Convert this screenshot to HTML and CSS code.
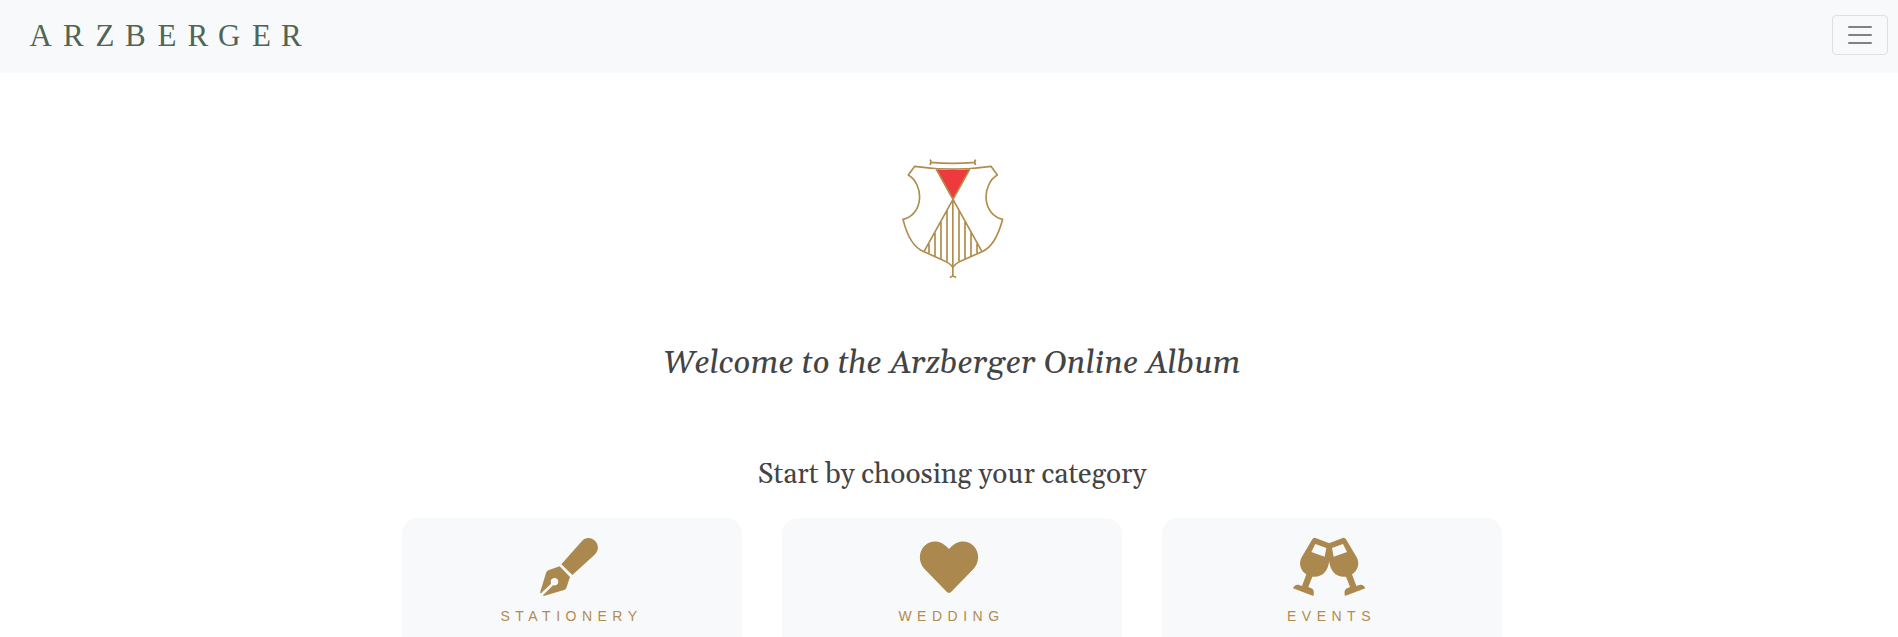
FILE: index.html
```html
<!DOCTYPE html>
<html lang="en">
<head>
<meta charset="utf-8">
<title>Arzberger Online Album</title>
<link rel="stylesheet" href="styles.css">
</head>
<body>
<header class="navbar">
  <a class="brand" aria-label="Arzberger">
    <svg width="290" height="40" viewBox="20 15 290 40"><text class="brand-text" y="46" x="29.5 63 95.5 125 157.500 187.500 218 252 281">ARZBERGER</text></svg>
  </a>
  <button class="toggler" aria-label="Menu">
    <svg width="30" height="30" viewBox="0 0 30 30"><path d="M4 7h22M4 15h22M4 23h22" fill="none" stroke="currentColor" stroke-width="2" stroke-linecap="round"/></svg>
  </button>
</header>
<main class="content">
  <svg class="crest" width="130" height="135" viewBox="0 0 390 405">
    <path class="ruby" d="M139 58Q188 62 239 58L188.500 147Z"/>
    <g class="lines">
      <path d="M120 29Q126 36 120 45M257 29Q251 36 257 45M122 37Q188 43 255 37"/>
      <path d="M74 49Q188 66 303 49L322 75C276 102 273 192 338 208C324 260 302 295 276 305L215 332Q196 340 188.500 352Q181 340 162 332L102 305C75 295 52 260 39 208C104 192 101 102 55 75Z"/>
      <path d="M139 58L276 305M239 58L102 305M188.500 147V379M117 281V310M135 248V318M153 216V327M171 181V335M207 181V335M225 216V327M243 248V318M261 281V310M180 383Q188.500 374 198 383"/>
    </g>
  </svg>
  <h1 class="title">Welcome to the Arzberger Online Album</h1>
  <h2 class="subtitle">Start by choosing your category</h2>
  <nav class="cards">
    <a class="card">
      <svg class="icon" width="82" height="66" viewBox="413 87 246 198"><path d="M513 178L573 110C599 79 643 120 612 150L546 210ZM508 184L539 216L528 249Q526 253 521 255L460 273L458 271L488 241C497 243 504 238 504 230C504 215 481 215 481 230L482 236L452 265L449 263L467 204Q469 198 474 196Z"/></svg>
      <span class="label">STATIONERY</span>
    </a>
    <a class="card">
      <svg class="icon" width="82" height="66" viewBox="413 87 246 198"><path d="M536 132C513 105 484 103 463 122C443 141 445 173 462 191L529 260Q536 267 543 260L610 191C627 173 629 141 609 122C588 103 559 105 536 132Z"/></svg>
      <span class="label">WEDDING</span>
    </a>
    <a class="card">
      <svg class="icon" width="82" height="66" viewBox="413 87 246 198"><path id="glass" fill-rule="evenodd" d="M496 99L537 115V166C533 199 517 218 486 215L474 246L486 251Q493 257 489 273L428 250C432 240 439 237 446 240L455 243L468 208C450 197 444 175 454 157L485 104Q489 97 496 99ZM495 117L483 141L523 155L528 129Z"/><use href="#glass" transform="translate(1073 0) scale(-1 1)"/></svg>
      <span class="label">EVENTS</span>
    </a>
  </nav>
</main>
</body>
</html>
```
FILE: styles.css
```css
* { box-sizing: border-box; }
html, body { height: 100%; }
body { margin: 0; background: #fff; overflow: hidden; display: flex; flex-direction: column; }
svg { display: block; flex: none; }
.navbar { flex: none; height: 73px; padding: 0 10px 3px 20px; display: flex; align-items: center; justify-content: space-between; background: #f8f9fb; }
.brand-text { font: 31px "Liberation Serif", serif; fill: #4f6653; }
.toggler { width: 56px; height: 40px; padding: 0; display: flex; align-items: center; justify-content: center; background: transparent; border: 1px solid rgba(0,0,0,.1); border-radius: 4px; color: #808182; }
.content { flex: none; padding: 77px 0 0 6px; display: flex; flex-direction: column; align-items: center; }
.crest { margin-left: 6px; }
.ruby { fill: #ef3a3d; }
.lines { fill: none; stroke: #b18c4d; stroke-width: 5; stroke-linejoin: round; }
.title, .subtitle { margin: 0; font-family: Gelasio, Georgia, "Liberation Serif", serif; font-weight: 400; color: #444; white-space: nowrap; }
.title { margin-top: 54px; height: 50px; font-size: 32px; line-height: 50px; font-style: italic; }
.subtitle { margin-top: 63px; height: 46px; font-size: 28px; line-height: 46px; }
.cards { margin-top: 20px; display: flex; gap: 40px; }
.card { width: 340px; height: 140px; padding-top: 16px; border-radius: 16px; background: #f8f9fb; display: flex; flex-direction: column; align-items: center; }
.icon { fill: #ab894e; margin-left: -6px; }
.label { margin: 7px 1px 0 0; font: 14px/18px "Liberation Sans", sans-serif; letter-spacing: 5.500px; color: #b18c4d; }
```
